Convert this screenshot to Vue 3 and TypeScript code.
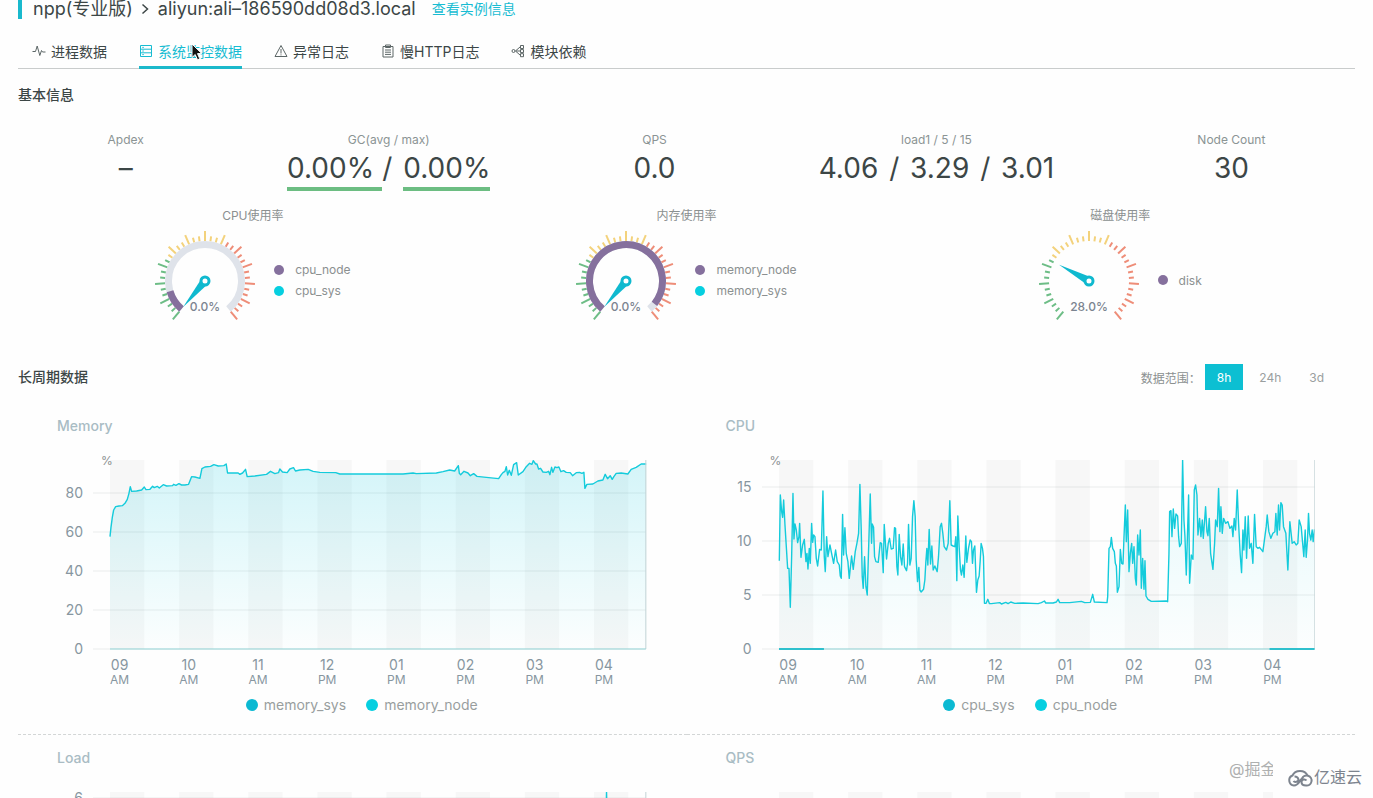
<script setup lang="ts">
type Zone = 'low' | 'mid' | 'high'

interface Tick {
  x1: number
  y1: number
  x2: number
  y2: number
  zone: Zone
}

interface Gauge {
  title: string
  label: string
  value: number
  ring: number | null
  legend: { name: string; color: string }[]
}

interface Chart {
  id: string
  title: string
  unit: string
  ticks: string[]
  step: number
  shift: string
  line: string
  strength: number
  legend: { name: string; color: string }[]
  marks: [number, number][]
}

const CX = 50
const CY = 55
const SWEEP = 280
const START = -140

/** Point on the dial; degrees run clockwise from twelve o'clock. */
function polar(radius: number, degrees: number): [number, number] {
  const a = (degrees * Math.PI) / 180
  return [CX + radius * Math.sin(a), CY - radius * Math.cos(a)]
}

function arc(radius: number, from: number, to: number): string {
  const a = polar(radius, START + SWEEP * from)
  const b = polar(radius, START + SWEEP * to)
  const large = (to - from) * SWEEP > 180 ? 1 : 0
  return `M${a[0]} ${a[1]}A${radius} ${radius} 0 ${large} 1 ${b[0]} ${b[1]}`
}

const dialTicks: Tick[] = Array.from({ length: 37 }, (_, i) => {
  const share = i / 36
  const angle = START + SWEEP * share
  const [x1, y1] = polar(40, angle)
  const [x2, y2] = polar(i % 3 === 0 ? 50 : 45, angle)
  const zone: Zone = share < 0.3 ? 'low' : share < 0.6 ? 'mid' : 'high'
  return { x1, y1, x2, y2, zone }
})

const PURPLE = '#85709d'
const CYAN = '#06cfe0'
const TEAL = '#0bb9d2'

const gauges: Gauge[] = [
  {
    title: 'CPU使用率', label: '0.0%', value: 0, ring: 0.12,
    legend: [{ name: 'cpu_node', color: PURPLE }, { name: 'cpu_sys', color: CYAN }],
  },
  {
    title: '内存使用率', label: '0.0%', value: 0, ring: 0.96,
    legend: [{ name: 'memory_node', color: PURPLE }, { name: 'memory_sys', color: CYAN }],
  },
  {
    title: '磁盘使用率', label: '28.0%', value: 0.28, ring: null,
    legend: [{ name: 'disk', color: PURPLE }],
  },
]

const memoryLine =
  '330,290 333,262 337,232 341,210 347,200 357,198 367,197 375,190 382,178 387,160 391,140 395,154 410,153 425,150 433,141 438,149 450,148 458,139 463,143 472,139 478,144 490,134 500,138 518,137 521,133 528,136 537,131 545,135 555,135 566,133 575,110 585,111 600,115 606,86 615,81 632,79 642,74 655,78 672,77 679,72 683,99 715,99 720,103 728,99 737,88 742,110 765,108 800,103 812,94 825,101 836,98 840,87 848,96 862,98 870,87 881,83 887,93 900,90 925,88 940,94 960,97 1008,98 1020,102 1060,102 1210,102 1240,99 1250,101 1310,99 1330,95 1350,90 1365,93 1376,77 1379,100 1383,104 1393,94 1405,99 1412,107 1422,101 1432,109 1460,112 1497,116 1505,104 1510,98 1516,94 1520,80 1524,105 1529,91 1535,106 1542,74 1551,68 1556,105 1570,95 1580,80 1590,70 1597,73 1601,62 1608,72 1612,72 1617,87 1623,85 1630,96 1640,97 1647,94 1651,104 1656,82 1660,97 1666,81 1672,83 1678,81 1684,95 1692,92 1700,97 1712,98 1719,107 1730,98 1740,97 1747,100 1753,97 1756,145 1762,133 1780,132 1795,123 1810,120 1817,103 1824,116 1832,107 1838,118 1843,110 1850,100 1865,99 1885,102 1895,88 1910,82 1925,72 1940,72'

const cpuLine =
  '178,362 181,165 185,215 188,232 191,180 195,255 199,320 203,385 207,385 211,502 215,350 219,160 222,297 225,252 229,270 233,308 237,290 239,250 243,352 248,315 253,298 258,365 261,340 264,387 268,325 271,370 275,250 278,307 281,285 285,290 289,355 293,378 299,328 304,330 309,153 313,350 316,395 320,290 324,350 330,315 335,340 341,370 347,330 352,365 358,375 361,408 364,415 368,223 371,345 375,263 379,340 384,365 388,415 395,348 400,388 406,335 411,310 416,280 420,133 424,270 427,410 430,445 434,350 438,440 442,465 446,330 451,162 455,310 457,252 461,262 464,350 468,365 475,367 481,308 485,310 490,398 493,253 496,300 500,357 505,310 509,295 514,327 520,325 524,263 527,265 531,380 534,405 538,283 542,350 546,375 550,312 554,380 560,392 563,370 566,253 570,375 574,355 578,230 582,182 586,230 589,360 593,425 597,382 600,450 604,456 611,448 615,420 618,365 621,325 624,375 628,268 632,372 636,318 640,390 645,378 652,395 656,350 661,260 665,250 669,280 673,320 680,330 685,310 690,182 694,315 700,318 705,320 708,290 711,422 714,228 718,320 722,390 725,405 729,375 733,412 738,288 741,367 746,325 751,300 755,305 758,370 761,330 765,318 770,457 774,420 778,408 781,365 784,310 788,325 791,350 794,490 799,490 804,478 809,491 815,491 840,488 845,492 858,487 865,491 873,486 885,490 910,489 955,491 965,488 974,483 978,489 1000,489 1010,486 1015,478 1020,488 1050,488 1085,484 1095,488 1112,487 1119,463 1124,486 1162,488 1164,470 1168,325 1172,320 1175,292 1179,325 1184,335 1187,370 1190,378 1193,457 1198,440 1202,328 1206,370 1210,372 1213,290 1217,195 1220,305 1224,210 1228,395 1232,340 1236,310 1239,370 1243,320 1247,415 1250,435 1254,285 1258,345 1262,270 1265,445 1269,355 1273,448 1276,362 1279,468 1285,478 1295,484 1340,483 1344,485 1348,340 1350,215 1354,212 1357,290 1361,207 1365,265 1369,222 1374,228 1377,290 1380,320 1385,310 1389,60 1393,240 1396,290 1400,405 1407,165 1410,430 1415,345 1420,358 1424,150 1428,135 1432,165 1435,285 1440,235 1444,290 1448,240 1451,295 1458,200 1462,275 1465,287 1469,235 1473,340 1480,388 1485,310 1488,240 1493,260 1497,145 1501,275 1504,200 1508,280 1512,235 1518,250 1525,245 1531,265 1537,258 1540,290 1544,235 1548,270 1553,150 1557,250 1562,345 1566,398 1570,270 1573,330 1577,230 1581,355 1586,228 1590,325 1595,310 1600,370 1605,223 1610,320 1615,325 1620,322 1630,335 1640,260 1643,225 1648,275 1654,295 1660,280 1666,275 1669,220 1673,285 1677,195 1680,270 1684,188 1688,195 1692,260 1699,280 1705,390 1711,245 1718,310 1724,305 1730,315 1735,310 1739,240 1745,260 1753,350 1757,270 1760,352 1764,300 1767,220 1770,280 1774,300 1778,270 1781,305 1785,268'

const charts: Chart[] = [
  {
    id: 'memory', title: 'Memory', unit: '%', ticks: ['80', '60', '40', '20', '0'], step: 39,
    shift: 'translate(-279 -60)', line: memoryLine, strength: 1, marks: [],
    legend: [{ name: 'memory_sys', color: TEAL }, { name: 'memory_node', color: CYAN }],
  },
  {
    id: 'cpu', title: 'CPU', unit: '%', ticks: ['15', '10', '5', '0'], step: 54,
    shift: 'translate(-126 -60)', line: cpuLine, strength: 0.6, marks: [[51, 186], [1524, 1659]],
    legend: [{ name: 'cpu_sys', color: TEAL }, { name: 'cpu_node', color: CYAN }],
  },
  {
    id: 'load', title: 'Load', unit: '', ticks: ['6', '', '', ''], step: 61,
    shift: '', line: '51,360 400,330 800,400 1200,380 1534,340 1542,0 1550,340 1659,350', strength: 0.6, marks: [],
    legend: [],
  },
  {
    id: 'qps', title: 'QPS', unit: '', ticks: [''], step: 61,
    shift: '', line: '51,567 1659,567', strength: 0.6, marks: [],
    legend: [],
  },
]

const BASE = 567
const bands = Array.from({ length: 8 }, (_, i) => 51 + i * 207.6)

function gridY(chart: Chart, index: number): number {
  return BASE - (chart.ticks.length - 1 - index) * chart.step * 3
}

function area(line: string): string {
  const points = line.split(' ')
  const first = points[0].split(',')[0]
  const last = points[points.length - 1].split(',')[0]
  return `${first},627 ${line} ${last},627`
}

const hours = [
  ['09', 'AM'], ['10', 'AM'], ['11', 'AM'], ['12', 'PM'],
  ['01', 'PM'], ['02', 'PM'], ['03', 'PM'], ['04', 'PM'],
]
</script>

<template>
  <div class="page">
    <header class="head">
      <h1>npp(专业版)<svg class="chevron" viewBox="0 0 8 12"><path d="M1.5 1.5 6.5 6l-5 4.500" /></svg>aliyun:ali–186590dd08d3.local</h1>
      <a href="#instance">查看实例信息</a>
    </header>

    <nav class="tabs">
      <a href="#process" class="tab">
        <svg viewBox="0 0 14 14"><path d="M.5 7.500h3L5.200 2l2.600 9.500 1.700-5 1 1.500h3" /></svg>进程数据
      </a>
      <a href="#system" class="tab active">
        <svg viewBox="0 0 14 14"><path d="M1.500 1.500h11v11h-11zM1.500 5.200h11M1.500 8.800h11M3.300 3.400h1.500M3.300 7h1.500M3.300 10.600h1.500" /></svg>系统监控数据
      </a>
      <a href="#errors" class="tab">
        <svg viewBox="0 0 14 14"><path d="M7 1.500 13 12.500H1zM7 5v4.500M7 10.400v1" /></svg>异常日志
      </a>
      <a href="#slow" class="tab">
        <svg viewBox="0 0 14 14"><path d="M2 2.500h10v10.500H2zM4.500 1h5v2.500h-5zM4 6h6M4 8.200h6M4 10.400h6" /></svg>慢HTTP日志
      </a>
      <a href="#modules" class="tab">
        <svg viewBox="0 0 14 14"><circle cx="2.500" cy="7" r="1.500" /><path d="M4 7h5M5 6.500 9 3M5 7.500 9 11M9.500 1.500h3v3h-3zM9.500 5.600h3v3h-3zM9.500 9.700h3v3h-3z" /></svg>模块依赖
      </a>
    </nav>

    <section>
      <h2 class="basic">基本信息</h2>
      <dl class="stats">
        <div><dt>Apdex</dt><dd>–</dd></div>
        <div><dt>GC(avg / max)</dt><dd><span class="ok trail">0.00%</span>/<span class="ok lead">0.00%</span></dd></div>
        <div><dt>QPS</dt><dd>0.0</dd></div>
        <div><dt>load1 / 5 / 15</dt><dd>4.06 <span class="sep">/</span> 3.29 <span class="sep">/</span> 3.01</dd></div>
        <div><dt>Node Count</dt><dd>30</dd></div>
      </dl>

      <div class="gauges">
        <figure v-for="g in gauges" :key="g.title" class="gauge">
          <figcaption>{{ g.title }}</figcaption>
          <div class="gauge-body">
            <svg class="dial" viewBox="0 0 100 108">
              <line v-for="(t, i) in dialTicks" :key="i" :class="t.zone" :x1="t.x1" :y1="t.y1" :x2="t.x2" :y2="t.y2" />
              <template v-if="g.ring !== null">
                <path class="track" :d="arc(36.5, 0, 1)" />
                <path class="fill" :d="arc(36.5, 0, g.ring)" />
              </template>
              <g :transform="`rotate(${START + SWEEP * g.value} ${CX} ${CY})`">
                <path class="needle" d="M50 21 54 53h-8z" />
              </g>
              <circle class="pivot" :cx="CX" :cy="CY" r="4" />
              <text x="50" y="85">{{ g.label }}</text>
            </svg>
            <ul>
              <li v-for="l in g.legend" :key="l.name"><i :style="{ background: l.color }"></i>{{ l.name }}</li>
            </ul>
          </div>
        </figure>
      </div>
    </section>

    <section>
      <div class="toolbar">
        <h2>长周期数据</h2>
        <div class="range">
          <span>数据范围：</span>
          <button type="button" class="on">8h</button>
          <button type="button">24h</button>
          <button type="button">3d</button>
        </div>
      </div>

      <div class="charts">
        <article v-for="c in charts" :key="c.id" class="chart">
          <h3>{{ c.title }}</h3>
          <div class="chart-body">
            <div class="y-axis">
              <span v-for="(t, i) in c.ticks" :key="i" :style="{ height: c.step + 'px' }">{{ t }}</span>
            </div>
            <div class="plot">
              <span v-if="c.unit" class="unit">{{ c.unit }}</span>
              <svg viewBox="0 0 1662 570" preserveAspectRatio="none">
                <defs>
                  <linearGradient :id="'fade-' + c.id" gradientUnits="userSpaceOnUse" x1="0" y1="60" x2="0" y2="627">
                    <stop offset="0" stop-color="#00c4dc" :stop-opacity="0.17 * c.strength" />
                    <stop offset="0.25" stop-color="#00c8e0" :stop-opacity="0.13 * c.strength" />
                    <stop offset="1" stop-color="#00d8e8" stop-opacity="0.01" />
                  </linearGradient>
                </defs>
                <rect v-for="b in bands" :key="b" class="band" :x="b" y="0" width="103" height="567" />
                <line v-for="(t, i) in c.ticks" :key="i" class="grid" x1="0" x2="1660" :y1="gridY(c, i)" :y2="gridY(c, i)" />
                <g :transform="c.shift">
                  <polygon :points="area(c.line)" :fill="`url(#fade-${c.id})`" />
                  <polyline class="line" :points="c.line" />
                </g>
                <line class="edge" x1="1660" x2="1660" y1="0" y2="567" />
                <line class="node" x1="51" x2="1660" :y1="BASE" :y2="BASE" />
                <line v-for="m in c.marks" :key="m[0]" class="mark" :x1="m[0]" :x2="m[1]" :y1="BASE" :y2="BASE" />
              </svg>
              <div v-if="c.legend.length" class="x-axis">
                <span v-for="h in hours" :key="h[0]">{{ h[0] }}<small>{{ h[1] }}</small></span>
              </div>
            </div>
          </div>
          <ul v-if="c.legend.length" class="legend">
            <li v-for="l in c.legend" :key="l.name"><i :style="{ background: l.color }"></i>{{ l.name }}</li>
          </ul>
        </article>
      </div>
    </section>

    <svg class="cursor" viewBox="0 0 12 18"><path d="M1 1v13.500l3.200-3 2.300 5.300 2.300-1-2.300-5.200h4.300z" /></svg>
    <div class="credit">
      <span class="author">@掘金</span>
      <div class="brand">
        <svg viewBox="0 0 26 20"><path d="M20.500 8.500A8 7 0 0 0 5.500 8.500a5.200 5.200 0 0 0 1.500 10c4.500 0 5-4 8-7a5 5 0 1 1 4 7c-3 0-4.500-1.500-4.500-3.500a2.800 2.800 0 0 1 5-1.500M6.500 14c1 1.500 5 1 5-1.500a4 4 0 0 0-4-3" /></svg>
        亿速云
      </div>
    </div>
  </div>
</template>

<style>
body {
  margin: 0;
  background: #fefefe;
}
</style>

<style scoped>
.page {
  position: relative;
  box-sizing: border-box;
  height: 100vh;
  overflow: hidden;
  padding: 0 18px;
  font-family: Inter, "Noto Sans CJK SC", sans-serif;
  font-size: 14px;
  color: #3c4646;
}
h1, h2, h3, dl, dd, ul, figure {
  margin: 0;
  padding: 0;
}
ul {
  list-style: none;
}
.head {
  display: flex;
  align-items: center;
  gap: 16px;
  height: 18px;
  padding: 0 0 1px 11px;
  border-left: 4px solid #19b9cd;
}
.head h1 {
  font-size: 18px;
  font-weight: 400;
  line-height: 18px;
}
.chevron {
  width: 8px;
  height: 12px;
  margin: 0 9px 0 8px;
}
.chevron path {
  fill: none;
  stroke: #3c4646;
  stroke-width: 1.5;
}
.head a {
  line-height: 18px;
  color: #17bcd2;
  text-decoration: none;
}
.tabs {
  display: flex;
  gap: 32px;
  padding: 18px 0 0 14px;
  border-bottom: 1px solid #c9cccc;
}
.tab {
  display: flex;
  align-items: center;
  gap: 5px;
  height: 27px;
  padding-bottom: 2px;
  margin-bottom: -1px;
  border-bottom: 3px solid transparent;
  color: #3c4646;
  text-decoration: none;
}
.tab svg {
  width: 14px;
  height: 14px;
  fill: none;
  stroke: #5c6666;
  stroke-width: 1;
}
.tab.active {
  color: #17bcd2;
  border-color: #1cb9cb;
}
.tab.active svg {
  stroke: #17bcd2;
}
h2 {
  font-size: 14px;
  font-weight: 500;
  line-height: 20px;
}
.basic {
  margin-top: 16px;
}
.stats {
  display: flex;
  justify-content: space-around;
  margin-top: 25px;
  padding: 0 18px;
  text-align: center;
}
.stats dt {
  font-size: 12px;
  line-height: 20px;
  color: #8b9494;
}
.stats dd {
  height: 41px;
  font-size: 28px;
  line-height: 37px;
}
.ok {
  display: inline-block;
  border-bottom: 4px solid #6cbd82;
}
.trail {
  padding-right: 8px;
}
.lead {
  margin-left: 11px;
}
.sep {
  margin: 0 3px;
}
.gauges {
  display: grid;
  grid-template-columns: repeat(3, 1fr);
  margin-top: 15px;
  padding: 0 18px;
}
.gauge {
  display: flex;
  flex-direction: column;
  align-items: center;
  font-size: 12px;
  color: #8b9090;
}
.gauge figcaption {
  line-height: 20px;
}
.gauge-body {
  display: flex;
  align-items: center;
  gap: 19px;
}
.gauge li {
  display: flex;
  align-items: center;
  gap: 11px;
  line-height: 21px;
}
.gauge i {
  width: 10px;
  height: 10px;
  border-radius: 50%;
}
.dial {
  width: 100px;
  height: 108px;
}
.dial line {
  stroke-width: 2;
}
.low {
  stroke: #6dbd86;
}
.mid {
  stroke: #f3d27c;
}
.high {
  stroke: #ee8d78;
}
.track, .fill {
  fill: none;
  stroke-width: 7;
}
.track {
  stroke: #dfe3ea;
}
.fill {
  stroke: #85709d;
}
.needle {
  fill: #0fb9cf;
}
.pivot {
  fill: #fff;
  stroke: #0fb9cf;
  stroke-width: 3;
}
.dial text {
  font-size: 12px;
  font-weight: 500;
  text-anchor: middle;
  fill: #7b8490;
}
.toolbar {
  display: flex;
  align-items: center;
  justify-content: space-between;
  height: 26px;
  margin-top: 30px;
  padding-right: 19px;
}
.range {
  display: flex;
  align-items: center;
  gap: 4px;
  font-size: 12px;
  color: #8b9090;
}
.range button {
  height: 26px;
  padding: 0 12px;
  border: 0;
  background: transparent;
  font: inherit;
  color: #9a9f9f;
}
.range .on {
  background: #0cbfd2;
  color: #fff;
}
.charts {
  display: grid;
  grid-template-columns: 1fr 1fr;
  margin-top: 13px;
}
.chart {
  padding: 13px 40px 19px 39px;
  border-bottom: 1px dashed #d3d6d6;
}
.chart h3 {
  font-size: 14px;
  font-weight: 500;
  line-height: 20px;
  color: #a9bcc4;
}
.chart-body {
  display: flex;
  gap: 10px;
  margin-top: 24px;
}
.y-axis {
  display: flex;
  flex-direction: column;
  justify-content: flex-end;
  width: 26px;
  height: 189px;
  line-height: 0;
  color: #8796a0;
}
.y-axis span {
  display: flex;
  flex: none;
  align-items: flex-end;
  justify-content: flex-end;
}
.plot {
  position: relative;
  flex: 1;
}
.plot svg {
  display: block;
  width: 100%;
  height: 190px;
}
.unit {
  position: absolute;
  left: 8px;
  top: -8px;
  font-size: 12px;
  line-height: 18px;
  color: #8b9090;
}
.band {
  fill: #f7f7f7;
}
.plot line, .line {
  fill: none;
  vector-effect: non-scaling-stroke;
}
.grid {
  stroke: #5a6a6a;
  stroke-opacity: 0.13;
}
.line {
  stroke: #14cbdb;
  stroke-width: 1.4;
  stroke-linejoin: round;
}
.edge {
  stroke: #c2d3d5;
}
.node {
  stroke: #93d6d8;
}
.mark {
  stroke: #2fc0cd;
  stroke-width: 2;
}
.x-axis {
  display: grid;
  grid-template-columns: repeat(8, 1fr);
  margin: 7px 8px 0 -8px;
  line-height: 15px;
  text-align: center;
  color: #8796a0;
}
.x-axis small {
  display: block;
  font-size: 12px;
}
.legend {
  display: flex;
  justify-content: center;
  gap: 20px;
  margin-top: 8px;
  padding-left: 20px;
  line-height: 20px;
  color: #999e9e;
}
.legend li {
  display: flex;
  align-items: center;
  gap: 6px;
}
.legend i {
  width: 12px;
  height: 12px;
  border-radius: 50%;
}
.cursor {
  position: absolute;
  left: 191px;
  top: 43px;
  width: 12px;
  height: 18px;
}
.cursor path {
  fill: #111;
  stroke: #fff;
  stroke-width: 1;
}
.credit {
  position: absolute;
  right: 0;
  bottom: 0;
  display: flex;
  width: 144px;
  height: 43px;
}
.author {
  flex: none;
  width: 44px;
  overflow: hidden;
  white-space: nowrap;
  font-size: 16px;
  line-height: 28px;
  color: #aeb0b0;
}
.brand {
  display: flex;
  flex: 1;
  align-items: center;
  gap: 1px;
  padding-left: 14px;
  background: #fefefe;
  font-size: 16px;
  line-height: 20px;
  white-space: nowrap;
  color: #7d848e;
}
.brand svg {
  flex: none;
  width: 26px;
  height: 20px;
  fill: none;
  stroke: #7d848e;
  stroke-width: 2;
}
</style>
